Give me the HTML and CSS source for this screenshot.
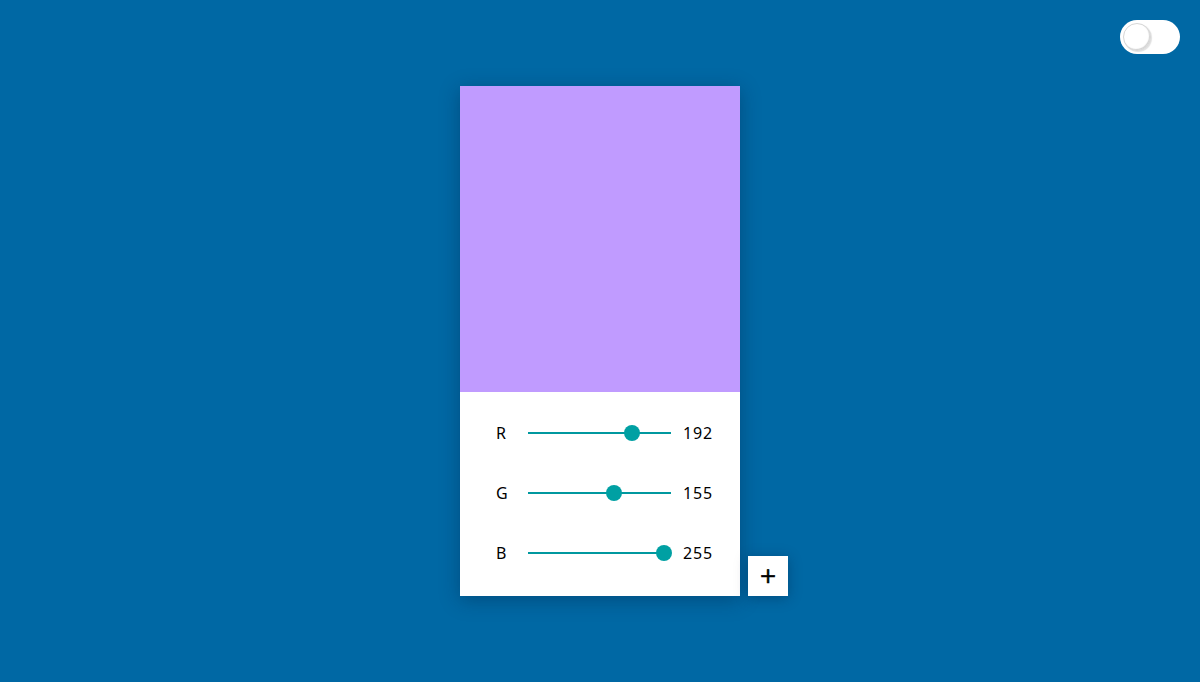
FILE: index.html
```html
<!DOCTYPE html>
<html lang="en">
<head>
<meta charset="utf-8">
<title>Color picker</title>
<link rel="stylesheet" href="styles.css">
</head>
<body>
<div class="toggle"><span class="knob"></span></div>
<main class="stage">
  <section class="card">
    <div class="swatch"></div>
    <div class="controls">
      <div class="row">
        <span class="label">R</span>
        <div class="slider"><div class="track"></div><div class="thumb" style="left: calc((100% - 16px) * 0.7529)"></div></div>
        <span class="value">192</span>
      </div>
      <div class="row">
        <span class="label">G</span>
        <div class="slider"><div class="track"></div><div class="thumb" style="left: calc((100% - 16px) * 0.6078)"></div></div>
        <span class="value">155</span>
      </div>
      <div class="row">
        <span class="label">B</span>
        <div class="slider"><div class="track"></div><div class="thumb" style="left: calc((100% - 16px) * 1)"></div></div>
        <span class="value">255</span>
      </div>
    </div>
    <button class="add">+</button>
  </section>
</main>
</body>
</html>
```

FILE: styles.css
```css
html, body {
  margin: 0;
  padding: 0;
  height: 100%;
}
body {
  background: #0068a4;
  font-family: "Noto Sans", "Open Sans", sans-serif;
  color: #000;
  position: relative;
  overflow: hidden;
}
.toggle {
  position: absolute;
  top: 20px;
  right: 20px;
  width: 60px;
  height: 34px;
  border-radius: 17px;
  background: #fff;
  box-sizing: border-box;
  padding: 3px;
}
.knob {
  display: block;
  width: 28px;
  height: 28px;
  border-radius: 50%;
  background: #fff;
  box-sizing: border-box;
  border: 1px solid #d6d6d6;
  box-shadow: inset -1px -1px 1px rgba(0,0,0,0.18), 1px 1px 1px rgba(0,0,0,0.12);
}
.stage {
  height: 100%;
  display: flex;
  align-items: center;
  justify-content: center;
}
.card {
  position: relative;
  width: 280px;
  background: #fff;
  box-shadow: 0 4px 18px rgba(0, 30, 60, 0.35);
}
.swatch {
  height: 306px;
  background: #c09bff;
}
.controls {
  padding: 11px 0 13px;
}
.row {
  height: 60px;
  display: flex;
  align-items: center;
  padding-left: 36px;
  font-size: 16px;
}
.label {
  width: 32px;
}
.slider {
  position: relative;
  width: 144px;
  height: 16px;
}
.track {
  position: absolute;
  left: 0;
  right: 1px;
  top: 7px;
  height: 2px;
  background: #00989f;
}
.thumb {
  position: absolute;
  top: 0;
  width: 16px;
  height: 16px;
  border-radius: 50%;
  background: #00a0a3;
}
.value {
  margin-left: 11px;
  letter-spacing: 0.8px;
}
.add {
  position: absolute;
  left: calc(100% + 8px);
  bottom: 0;
  width: 40px;
  height: 40px;
  border: none;
  background: #fff;
  padding: 0;
  font-family: "DejaVu Sans", sans-serif;
  font-size: 21px;
  line-height: 40px;
  color: #000;
  -webkit-text-stroke: 0.6px #000;
  box-shadow: 0 2px 12px rgba(0, 30, 60, 0.35);
  cursor: pointer;
}
```
